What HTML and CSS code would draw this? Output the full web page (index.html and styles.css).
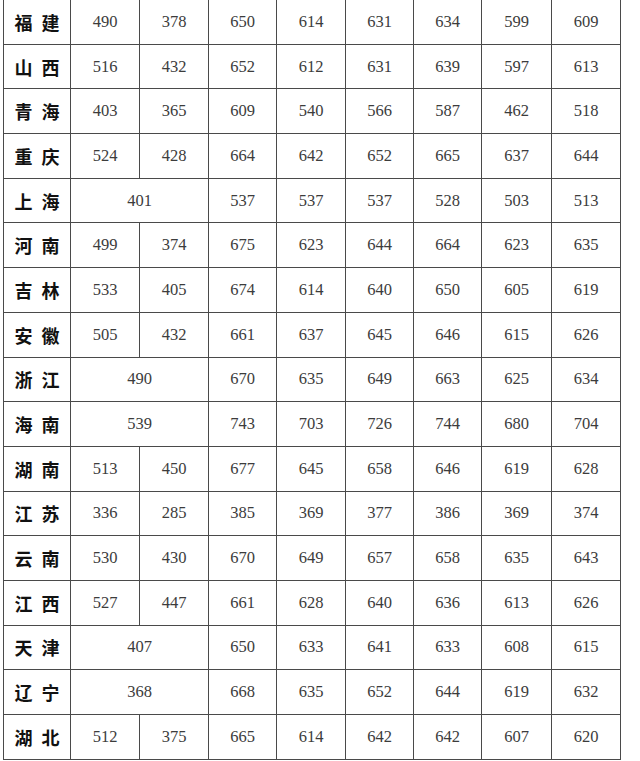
FILE: index.html
```html
<!DOCTYPE html>
<html lang="zh">
<head>
<meta charset="utf-8">
<link rel="stylesheet" href="styles.css">
</head>
<body>
<table class="scores">
<colgroup>
<col class="c-name"><col class="c-a"><col class="c-a"><col class="c-b"><col class="c-a"><col class="c-b"><col class="c-b"><col class="c-c"><col class="c-a">
</colgroup>
<tbody>
<tr><th>福建</th><td>490</td><td>378</td><td>650</td><td>614</td><td>631</td><td>634</td><td>599</td><td>609</td></tr>
<tr><th>山西</th><td>516</td><td>432</td><td>652</td><td>612</td><td>631</td><td>639</td><td>597</td><td>613</td></tr>
<tr><th>青海</th><td>403</td><td>365</td><td>609</td><td>540</td><td>566</td><td>587</td><td>462</td><td>518</td></tr>
<tr><th>重庆</th><td>524</td><td>428</td><td>664</td><td>642</td><td>652</td><td>665</td><td>637</td><td>644</td></tr>
<tr><th>上海</th><td colspan="2">401</td><td>537</td><td>537</td><td>537</td><td>528</td><td>503</td><td>513</td></tr>
<tr><th>河南</th><td>499</td><td>374</td><td>675</td><td>623</td><td>644</td><td>664</td><td>623</td><td>635</td></tr>
<tr><th>吉林</th><td>533</td><td>405</td><td>674</td><td>614</td><td>640</td><td>650</td><td>605</td><td>619</td></tr>
<tr><th>安徽</th><td>505</td><td>432</td><td>661</td><td>637</td><td>645</td><td>646</td><td>615</td><td>626</td></tr>
<tr><th>浙江</th><td colspan="2">490</td><td>670</td><td>635</td><td>649</td><td>663</td><td>625</td><td>634</td></tr>
<tr><th>海南</th><td colspan="2">539</td><td>743</td><td>703</td><td>726</td><td>744</td><td>680</td><td>704</td></tr>
<tr><th>湖南</th><td>513</td><td>450</td><td>677</td><td>645</td><td>658</td><td>646</td><td>619</td><td>628</td></tr>
<tr><th>江苏</th><td>336</td><td>285</td><td>385</td><td>369</td><td>377</td><td>386</td><td>369</td><td>374</td></tr>
<tr><th>云南</th><td>530</td><td>430</td><td>670</td><td>649</td><td>657</td><td>658</td><td>635</td><td>643</td></tr>
<tr><th>江西</th><td>527</td><td>447</td><td>661</td><td>628</td><td>640</td><td>636</td><td>613</td><td>626</td></tr>
<tr><th>天津</th><td colspan="2">407</td><td>650</td><td>633</td><td>641</td><td>633</td><td>608</td><td>615</td></tr>
<tr><th>辽宁</th><td colspan="2">368</td><td>668</td><td>635</td><td>652</td><td>644</td><td>619</td><td>632</td></tr>
<tr><th>湖北</th><td>512</td><td>375</td><td>665</td><td>614</td><td>642</td><td>642</td><td>607</td><td>620</td></tr>
</tbody>
</table>
</body>
</html>
```

FILE: styles.css
```css
html, body {
  margin: 0;
  padding: 0;
  background: #ffffff;
}

body {
  padding: 0 0 0 3px;
  overflow: hidden;
}

.scores {
  margin-top: -1px;
  border-collapse: collapse;
  table-layout: fixed;
  width: 618px;
}

.c-name { width: 67px; }
.c-a { width: 69px; }
.c-b { width: 68px; }
.c-c { width: 70px; }

.scores th,
.scores td {
  border: 1px solid #4a4a4a;
  height: 43.69px;
  padding: 0;
  text-align: center;
  vertical-align: middle;
}

.scores th {
  font-family: "Noto Sans CJK SC", "Noto Sans", sans-serif;
  font-weight: 700;
  font-size: 18px;
  letter-spacing: 9px;
  text-indent: 9px;
  color: #111111;
}

.scores td {
  font-family: "Liberation Serif", "DejaVu Serif", serif;
  font-size: 16.5px;
  color: #3c3c3c;
}
```
